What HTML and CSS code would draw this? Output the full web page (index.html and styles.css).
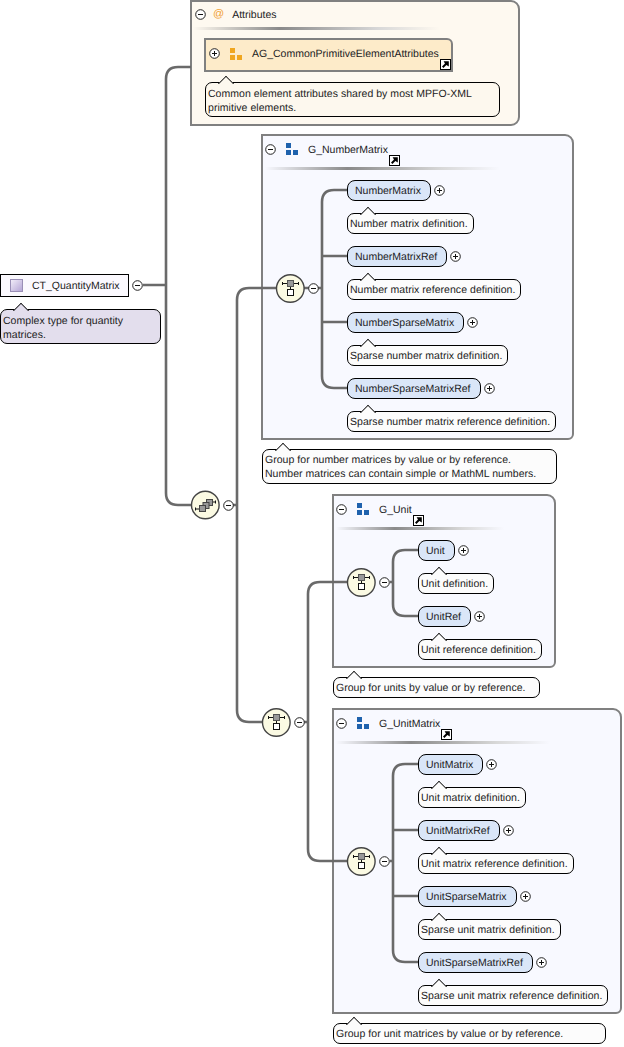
FILE: index.html
```html
<!DOCTYPE html>
<html lang="en">
<head>
<meta charset="utf-8">
<title>CT_QuantityMatrix</title>
<link rel="stylesheet" href="styles.css">
</head>
<body>
<svg class="defs" width="0" height="0" aria-hidden="true">
  <symbol id="minus" viewBox="0 0 11 11"><circle cx="5.5" cy="5.5" r="4.8" fill="#fff" stroke="#222" stroke-width="1"/><path d="M3 5.5h5" stroke="#111" stroke-width="1"/></symbol>
  <symbol id="plus" viewBox="0 0 11 11"><circle cx="5.5" cy="5.5" r="4.8" fill="#fff" stroke="#222" stroke-width="1"/><path d="M3 5.5h5M5.5 3v5" stroke="#111" stroke-width="1"/></symbol>
  <symbol id="link" viewBox="0 0 11 11"><rect x=".5" y=".5" width="10" height="10" fill="#fff" stroke="#000"/><path d="M2 7.600 5 4.600 3.600 2.200H8.800V7.400L6.400 6 3.400 9z" fill="#000"/></symbol>
  <symbol id="group" viewBox="0 0 12 12"><path d="M0 0h5v5H0zM0 7h5v5H0zM7 7h5v5H7z"/></symbol>
  <symbol id="seq" viewBox="0 0 30 30"><circle cx="15.300" cy="15.500" r="13.800" fill="#fbfae3" stroke="#444" stroke-width="1.400"/><path d="M7 10.500h17M7.500 9v3M23.500 9v3M15.500 13v3" stroke="#111" fill="none"/><rect x="12.500" y="7.500" width="6" height="6" fill="#999" stroke="#555"/><rect x="12.500" y="16.500" width="6" height="6" fill="#fff" stroke="#111"/></symbol>
  <symbol id="choice" viewBox="0 0 30 30"><circle cx="15.300" cy="15" r="13.800" fill="#fbfae3" stroke="#444" stroke-width="1.400"/><path d="M5.500 19h4M22 12h3.500M25.500 10.500v3M5.500 17.500v3" stroke="#111" fill="none"/><rect x="16.500" y="9.500" width="6" height="6" fill="#999" stroke="#444"/><rect x="13" y="12.500" width="6" height="6" fill="#999" stroke="#444"/><rect x="9.500" y="15.500" width="6" height="6" fill="#999" stroke="#444"/></symbol>
</svg>

<main class="canvas">
  <div class="root-node">
    <span class="type-icon"></span>
    <span>CT_QuantityMatrix</span>
  </div>
  <p class="note note-root lilac">Complex type for quantity<br>matrices.</p>

  <section class="attrs">
    <header class="head head-attrs">
      <svg class="ctl"><use href="#minus"/></svg>
      <span class="at">@</span>
      <span class="title">Attributes</span>
    </header>
    <div class="rule rule-attrs"></div>
    <div class="ag">
      <svg class="ctl"><use href="#plus"/></svg>
      <svg class="gicon orange"><use href="#group"/></svg>
      <span class="title">AG_CommonPrimitiveElementAttributes</span>
      <svg class="link link-ag"><use href="#link"/></svg>
    </div>
    <p class="note note-ag cream">Common element attributes shared by most MPFO-XML<br>primitive elements.</p>
  </section>

  <section class="group g-number">
    <header class="head">
      <svg class="ctl"><use href="#minus"/></svg>
      <svg class="gicon"><use href="#group"/></svg>
      <span class="title">G_NumberMatrix</span>
      <svg class="link"><use href="#link"/></svg>
    </header>
    <div class="rule rule-number"></div>
    <div class="stack">
      <div class="item"><div class="row"><span class="pill">NumberMatrix</span><svg class="ctl"><use href="#plus"/></svg></div><p class="note">Number matrix definition.</p></div>
      <div class="item"><div class="row"><span class="pill">NumberMatrixRef</span><svg class="ctl"><use href="#plus"/></svg></div><p class="note">Number matrix reference definition.</p></div>
      <div class="item"><div class="row"><span class="pill">NumberSparseMatrix</span><svg class="ctl"><use href="#plus"/></svg></div><p class="note">Sparse number matrix definition.</p></div>
      <div class="item"><div class="row"><span class="pill">NumberSparseMatrixRef</span><svg class="ctl"><use href="#plus"/></svg></div><p class="note">Sparse number matrix reference definition.</p></div>
    </div>
  </section>
  <p class="note note-number">Group for number matrices by value or by reference.<br>Number matrices can contain simple or MathML numbers.</p>

  <section class="group g-unit">
    <header class="head">
      <svg class="ctl"><use href="#minus"/></svg>
      <svg class="gicon"><use href="#group"/></svg>
      <span class="title">G_Unit</span>
      <svg class="link"><use href="#link"/></svg>
    </header>
    <div class="rule rule-unit"></div>
    <div class="stack">
      <div class="item"><div class="row"><span class="pill">Unit</span><svg class="ctl"><use href="#plus"/></svg></div><p class="note">Unit definition.</p></div>
      <div class="item"><div class="row"><span class="pill">UnitRef</span><svg class="ctl"><use href="#plus"/></svg></div><p class="note">Unit reference definition.</p></div>
    </div>
  </section>
  <p class="note note-unit">Group for units by value or by reference.</p>

  <section class="group g-unitmatrix">
    <header class="head">
      <svg class="ctl"><use href="#minus"/></svg>
      <svg class="gicon"><use href="#group"/></svg>
      <span class="title">G_UnitMatrix</span>
      <svg class="link"><use href="#link"/></svg>
    </header>
    <div class="rule rule-unitmatrix"></div>
    <div class="stack">
      <div class="item"><div class="row"><span class="pill">UnitMatrix</span><svg class="ctl"><use href="#plus"/></svg></div><p class="note">Unit matrix definition.</p></div>
      <div class="item"><div class="row"><span class="pill">UnitMatrixRef</span><svg class="ctl"><use href="#plus"/></svg></div><p class="note">Unit matrix reference definition.</p></div>
      <div class="item"><div class="row"><span class="pill">UnitSparseMatrix</span><svg class="ctl"><use href="#plus"/></svg></div><p class="note">Sparse unit matrix definition.</p></div>
      <div class="item"><div class="row"><span class="pill">UnitSparseMatrixRef</span><svg class="ctl"><use href="#plus"/></svg></div><p class="note">Sparse unit matrix reference definition.</p></div>
    </div>
  </section>
  <p class="note note-unitmatrix">Group for unit matrices by value or by reference.</p>

  <svg class="wires" width="624" height="1047" viewBox="0 0 624 1047" aria-hidden="true">
    <g class="wire">
      <path d="M143 285H166M191 67H178Q166 67 166 79V493Q166 505 178 505H191"/>
      <path d="M233 505H237M276 288H249Q237 288 237 300V710Q237 722 249 722H263"/>
      <path d="M304 288H322M347 190H334Q322 190 322 202V376Q322 388 334 388H347M322 256H347M322 322H347"/>
      <path d="M304 722H308M347 582H320Q308 582 308 594V849Q308 861 320 861H347"/>
      <path d="M390 582H393M418 550H405Q393 550 393 562V604Q393 616 405 616H418"/>
      <path d="M390 861H393M418 764H405Q393 764 393 776V950Q393 962 405 962H418M418 830H393M418 896H393"/>
    </g>
    <use href="#choice" x="190" y="490" width="30" height="30"/>
    <use href="#seq" x="275" y="273" width="30" height="30"/>
    <use href="#seq" x="261" y="707" width="30" height="30"/>
    <use href="#seq" x="346" y="567" width="30" height="30"/>
    <use href="#seq" x="346" y="846" width="30" height="30"/>
    <use href="#minus" x="132" y="280" width="11" height="11"/>
    <use href="#minus" x="223" y="500" width="11" height="11"/>
    <use href="#minus" x="308" y="283" width="11" height="11"/>
    <use href="#minus" x="294" y="717" width="11" height="11"/>
    <use href="#minus" x="379" y="577" width="11" height="11"/>
    <use href="#minus" x="379" y="856" width="11" height="11"/>
  </svg>
</main>
</body>
</html>
```
FILE: styles.css
```css
* { box-sizing: border-box; }
html, body { margin: 0; padding: 0; }
body { background: #fff; font-family: "Liberation Sans", Arial, sans-serif; color: #1c1c24; overflow: hidden; text-rendering: geometricPrecision; }
.defs { position: absolute; }
.canvas { position: relative; width: 624px; height: 1047px; overflow: hidden; font-size: 10.5px; }
.wires { position: absolute; left: 0; top: 0; pointer-events: none; }
.wire path { fill: none; stroke: #6a6a6a; stroke-width: 2.6; }

.root-node { position: absolute; left: 0; top: 274px; width: 129px; height: 23px; display: flex; align-items: center; gap: 9px; padding-left: 9px; border: 1px solid #000; background: #fbf9fe; }
.type-icon { width: 13px; height: 13px; flex: none; border: 1px solid #9a8fb6; background: linear-gradient(135deg, #f1ecf8, #b5a6d6); }

.note { position: absolute; margin: 0; padding: 0 3px 0 2px; border: 1px solid #000; border-radius: 7px; background: #fcfcfc; font-size: 10.5px; line-height: 14px; white-space: nowrap; letter-spacing: .04px; color: #222; }
.note::before { content: ""; position: absolute; left: 14px; top: -5px; width: 11px; height: 11px; background: inherit; border-left: 1px solid #000; border-top: 1px solid #000; transform: rotate(45deg); clip-path: polygon(0 0, 100% 0, 0 100%); }
.lilac { background: #e3deed; }
.cream { background: #fdf8ee; }
.note-root { left: 0; top: 309px; width: 161px; height: 35px; padding-top: 4px; }
.note-ag { position: relative; margin: 10px 0 0 10px; width: 295px; height: 35px; padding-top: 4px; }
.note-number { left: 262px; top: 449px; width: 295px; height: 35px; padding-top: 3px; }
.note-unit { left: 333px; top: 677px; width: 207px; height: 21px; line-height: 20px; }
.note-unitmatrix { left: 333px; top: 1023px; width: 273px; height: 21px; line-height: 20px; }

.attrs { position: absolute; left: 190px; top: 0; width: 330px; height: 126px; border: 2px solid #808080; border-radius: 0 9px 9px 0; background: #fef9f0; padding: 0 0 0 3px; }
.group { position: absolute; border: 2px solid #808080; border-radius: 0 9px 6px 0; background: #f8f9ff; }
.g-number { left: 261px; top: 134px; width: 313px; height: 306px; }
.g-unit { left: 332px; top: 494px; width: 224px; height: 174px; }
.g-unitmatrix { left: 332px; top: 708px; width: 290px; height: 306px; }
.head { display: flex; align-items: center; height: 26px; padding: 0 0 0 2px; }
.head-attrs { height: 24px; padding-left: 0; }
.head .title { margin-top: 2px; }
.head .link { align-self: flex-end; margin: 0 0 -4px 1px; }
.ctl { width: 11px; height: 11px; flex: none; }
.gicon { width: 12px; height: 12px; fill: #1f62ad; margin: 0 10px; flex: none; }
.orange { fill: #f0a61e; }
.at { color: #f0a030; font-size: 11px; margin: 0 8px 0 7px; }
.link { width: 11px; height: 11px; flex: none; }
.rule { height: 3px; margin: 5px 0 0 2px; background: linear-gradient(90deg, transparent, #8a8a8a 35%, #d8d8d8 75%, transparent); }
.rule-attrs { margin: 1px 0 0 -2px; width: 247px; }
.rule-number { width: 235px; }
.rule-unit { width: 168px; }
.rule-unitmatrix { width: 214px; }

.ag { position: relative; display: flex; align-items: center; margin: 8px 0 0 9px; width: 249px; height: 34px; padding: 0 0 3px 3px; border: 2px solid #808080; border-radius: 0 6px 0 0; background: #fdebc9; }
.link-ag { position: absolute; right: 0; bottom: 0; }

.stack { display: flex; flex-direction: column; align-items: flex-start; gap: 12px; margin: 10px 0 0 84px; }
.item { display: flex; flex-direction: column; align-items: flex-start; gap: 12px; }
.row { display: flex; align-items: center; gap: 3px; }
.pill { height: 21px; padding: 0 9px 0 7px; line-height: 20px; border: 1px solid #000; border-radius: 8px; background: #dae6f8; }
.item .note { position: relative; height: 21px; line-height: 20px; padding-right: 5px; }
```
